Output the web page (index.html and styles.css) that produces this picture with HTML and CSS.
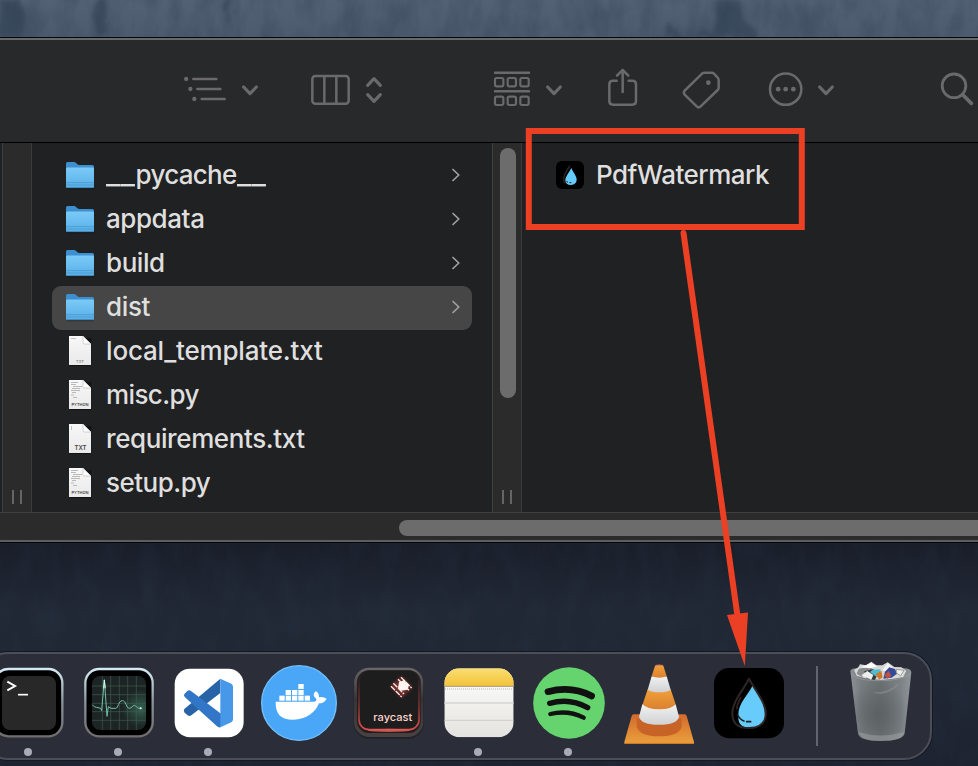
FILE: index.html
```html
<!DOCTYPE html>
<html lang="en">
<head>
<meta charset="utf-8">
<title>Finder</title>
<link rel="stylesheet" href="styles.css">
</head>
<body>
<svg class="defs" width="0" height="0" aria-hidden="true">
  <defs>
    <linearGradient id="folderFront" x1="0" y1="0" x2="0" y2="1"><stop offset="0" stop-color="#7bcbf8"/><stop offset="1" stop-color="#58aee6"/></linearGradient>
    <linearGradient id="paper" x1="0" y1="0" x2="0" y2="1"><stop offset="0" stop-color="#f8f8f8"/><stop offset="1" stop-color="#e9e9e9"/></linearGradient>
    <linearGradient id="bezel" x1="0" y1="0" x2="0" y2="1"><stop offset="0" stop-color="#d5e9f3"/><stop offset=".5" stop-color="#87939b"/><stop offset="1" stop-color="#716e6e"/></linearGradient>
    <symbol id="folder" viewBox="0 0 30 44">
      <rect x="1.5" y="31" width="27.500" height="4.500" rx="1" fill="#000" opacity=".22"/>
      <path d="M1 9.500Q1 8 2.500 8H9.300Q10.300 8 11 8.900L12.500 10.300Q13.200 11 14 11H27.500Q29 11 29 12.500V32Q29 33.500 27.500 33.500H2.500Q1 33.500 1 32Z" fill="#3e8fd0"/>
      <path d="M1 14.700Q1 13.500 2.500 13.500H27.500Q29 13.500 29 14.700V32.500Q29 34 27.500 34H2.500Q1 34 1 32.500Z" fill="url(#folderFront)"/>
      <path d="M1 28.600H29M1 31H29" stroke="#4594cb" stroke-width=".7"/>
      <path d="M2 33.600H28" stroke="#397fae" stroke-width=".8"/>
    </symbol>
    <symbol id="page" viewBox="0 0 30 44">
      <rect x="4.300" y="8" width="22" height="28" fill="#000" opacity=".4"/>
      <path d="M4 6H18L26 14V35H4Z" fill="url(#paper)"/>
      <path d="M18 6V12.500Q18 14 19.500 14H26Z" fill="#fff" stroke="#b5b5b5" stroke-width=".6"/>
    </symbol>
    <symbol id="code" viewBox="0 0 30 44">
      <path d="M6 8.500h7M6 10.500h5M8 12.500h9M7 14.500h8M6 16.500h9M7 18.500h4M6 21h3M8 23.500h4" stroke="#aaa" stroke-width=".8"/>
    </symbol>
    <symbol id="chev" viewBox="0 0 10 16"><path d="M2 2.500L7.800 8L2 13.500" fill="none" stroke="#a1a1a2" stroke-width="1.700" stroke-linecap="round" stroke-linejoin="round"/></symbol>
  </defs>
</svg>

<div class="desktop">
  <svg class="wall" width="978" height="766" aria-hidden="true">
    <defs>
      <filter id="grain" x="0" y="0" width="100%" height="100%" color-interpolation-filters="sRGB"><feTurbulence type="fractalNoise" baseFrequency=".05 .025" numOctaves="5" seed="8"/><feColorMatrix values="0 0 0 0 .16  0 0 0 0 .22  0 0 0 0 .29  1.6 0 0 0 -.55"/></filter>
      <filter id="smudge" x="-30%" y="-30%" width="160%" height="160%"><feTurbulence type="fractalNoise" baseFrequency=".12 .05" numOctaves="3" seed="3"/><feDisplacementMap in="SourceGraphic" scale="18"/><feGaussianBlur stdDeviation="2"/></filter>
    </defs>
    <rect width="978" height="38" filter="url(#grain)" opacity=".4"/>
    <rect y="543" width="978" height="223" filter="url(#grain)" opacity=".3"/>
    <g fill="#2c3a4e" filter="url(#smudge)" opacity=".5"><path d="M0 0H22L28 20L18 38H0Z"/><path d="M718 0H738L742 18L756 30V38H660L668 22L684 38L716 28Z"/><path d="M96 0H106L102 38H94Z"/><path d="M224 0H234L228 28Z"/></g>
  </svg>

  <main class="window">
    <header class="toolbar">
      <svg class="tool tool-list" width="85" height="50" viewBox="30 33 255 150"><g fill="#6a6a6c"><circle cx="48.500" cy="72" r="6.500"/><circle cx="61" cy="102" r="6.500"/><circle cx="73" cy="132" r="6.500"/></g><path class="ln w7" d="M70 72H139M82 102H151M95 132H164"/><path class="ln w9" d="M221 96L240 116L259 96"/></svg>
      <svg class="tool tool-columns" width="83" height="50" viewBox="405 33 249 150"><rect class="ln w7" x="427" y="63" width="109" height="83" rx="9"/><path class="ln w7 butt" d="M463 63V146M499 63V146"/><path class="ln w9" d="M593 91L612 71L631 91M593 119L612 139L631 119"/></svg>
      <svg class="tool tool-group" width="80" height="50" viewBox="24 33 240 150"><path class="ln w7" d="M45 53H147M45 109H147"/><g class="ln w6"><rect x="45" y="69" width="25" height="25" rx="5"/><rect x="83" y="69" width="25" height="25" rx="5"/><rect x="121" y="69" width="25" height="25" rx="5"/><rect x="45" y="125" width="25" height="25" rx="5"/><rect x="83" y="125" width="25" height="25" rx="5"/><rect x="121" y="125" width="25" height="25" rx="5"/></g><path class="ln w9" d="M203 96L222 116L241 96"/></svg>
      <svg class="tool tool-share" width="40" height="50" viewBox="369 33 120 150"><path class="ln w7" d="M410 77H399Q388 77 388 88V138Q388 149 399 149H457Q468 149 468 138V88Q468 77 457 77H446M428 111V47M411 62L428 45L445 62"/></svg>
      <svg class="tool tool-tag" width="48" height="50" viewBox="594 33 144 150"><path class="ln w7" d="M667 55Q670 53 674 53H695Q699 53 702 56L713 68Q716 71 716 75V98Q716 102 713 105L662 154Q656 160 650 154L614 119Q609 113 614 107Z"/><circle cx="685" cy="83" r="7" fill="#6a6a6c"/></svg>
      <svg class="tool tool-more" width="74" height="50" viewBox="72 33 222 150"><circle class="ln w7" cx="137" cy="102.500" r="47"/><g fill="#6a6a6c"><circle cx="114.500" cy="102.500" r="7"/><circle cx="137" cy="102.500" r="7"/><circle cx="160" cy="102.500" r="7"/></g><path class="ln w9" d="M239 96L258 116L277 96"/></svg>
      <svg class="tool tool-search" width="42" height="50" viewBox="588 33 126 150"><circle class="ln w8" cx="642" cy="92.500" r="35.500"/><path class="ln w10" d="M669 120L694 145"/></svg>
    </header>

    <section class="columns">
      <div class="edge"></div>
      <div class="gutter gutter-left"><i class="grip"></i></div>
      <ul class="files">
        <li class="row"><svg width="30" height="44"><use href="#folder"/></svg><span class="name n1"><span class="under">__</span>pycache<span class="under">__</span></span><svg class="more" width="10" height="16"><use href="#chev"/></svg></li>
        <li class="row"><svg width="30" height="44"><use href="#folder"/></svg><span class="name n2">appdata</span><svg class="more" width="10" height="16"><use href="#chev"/></svg></li>
        <li class="row"><svg width="30" height="44"><use href="#folder"/></svg><span class="name n3">build</span><svg class="more" width="10" height="16"><use href="#chev"/></svg></li>
        <li class="row selected"><svg width="30" height="44"><use href="#folder"/></svg><span class="name n4">dist</span><svg class="more" width="10" height="16"><use href="#chev"/></svg></li>
        <li class="row"><svg width="30" height="44"><use href="#page"/><path d="M6 8.500h5" stroke="#aaa" stroke-width=".7"/><text class="ext faint" x="15" y="32.500">TXT</text></svg><span class="name n5">local_template.txt</span></li>
        <li class="row"><svg width="30" height="44"><use href="#page"/><use href="#code"/><text class="ext py" x="15" y="32">PYTHON</text></svg><span class="name n6">misc.py</span></li>
        <li class="row"><svg width="30" height="44"><use href="#page"/><path d="M6.500 8v4" stroke="#aaa" stroke-width=".7"/><text class="ext txt" x="15.500" y="32">TXT</text></svg><span class="name n7">requirements.txt</span></li>
        <li class="row"><svg width="30" height="44"><use href="#page"/><use href="#code"/><text class="ext py" x="15" y="32">PYTHON</text></svg><span class="name n8">setup.py</span></li>
      </ul>
      <div class="gutter gutter-mid"><i class="thumb"></i><i class="grip"></i></div>
      <ul class="files apps">
        <li class="row"><svg class="app" width="28" height="28" viewBox="0 0 84 84"><rect width="84" height="84" rx="18" fill="#000"/><path d="M42 14C34 26 23 42 23 53Q23 62 28 67" fill="none" stroke="#302625" stroke-width="4"/><path d="M46 21C40 34 28 47 28 57Q28 72 45 72Q62 71 62 55C62 45 51 34 46 21Z" fill="#65cbfb"/><path d="M31 61L36 64M40 65H46" stroke="#211d1c" stroke-width="3"/></svg><span class="name n9">PdfWatermark</span></li>
      </ul>
    </section>
    <footer class="hscroll"><i class="hthumb"></i></footer>
  </main>

  <nav class="dock">
    <svg class="item" width="90" height="104" viewBox="-48 27 270 312">
      <rect x="-17" y="72" width="204" height="202" rx="42" fill="#000" stroke="url(#bezel)" stroke-width="7"/><rect x="6" y="93" width="162" height="162" rx="24" fill="#282828"/>
      <path d="M22 110L45 123L22 136" fill="none" stroke="#fff" stroke-width="6"/><path d="M54 149H84" stroke="#fff" stroke-width="5"/><circle class="dot" cx="84" cy="321" r="12"/></svg>
    <svg class="item" width="90" height="104" viewBox="222 27 270 312">
      <defs><radialGradient id="glow" cx=".9" cy=".6" r=".35"><stop offset="0" stop-color="#35604f"/><stop offset="1" stop-color="#1c2523"/></radialGradient></defs>
      <rect x="256" y="72" width="202" height="202" rx="42" fill="#000" stroke="url(#bezel)" stroke-width="7"/><rect x="276" y="93" width="162" height="162" rx="24" fill="url(#glow)"/>
      <path d="M307 93V255M332 93V255M358 93V255M383 93V255M409 93V255M276 123H438M276 149H438M276 175H438M276 200H438M276 226H438" stroke="#435b55" stroke-width="2"/>
      <path d="M277 179Q283 188 290 187L302 190L305 197L313 104L321 214L325 185L333 190H347C355 190 355 167 367 167C379 167 378 190 388 190C396 190 397 181 403 181C409 181 408 191 424 190" fill="none" stroke="#73bfa9" stroke-width="3" stroke-linejoin="round"/><path d="M311 130L313 105L316 130" fill="none" stroke="#d6fff3" stroke-width="3"/><circle cx="422" cy="190" r="3" fill="#d6fff3"/><circle class="dot" cx="354" cy="321" r="12"/></svg>
    <svg class="item" width="90" height="104" viewBox="492 27 270 312">
      <rect x="524" y="71" width="207" height="206" rx="46" fill="#fff"/>
      <path d="M661 101L553 192Q549 197 554 203L563 211Q568 215 574 211L661 144Z" fill="#2863a7"/>
      <path d="M572 137Q567 134 562 138L553 147Q550 152 555 157L651 244Q656 249 663 246V206Z" fill="#3277c7"/>
      <path d="M661 101L694 116Q699 119 699 125V222Q699 229 694 232L661 247Z" fill="#4798e9"/><circle class="dot" cx="624" cy="321" r="12"/></svg>
    <svg class="item" width="90" height="104" viewBox="12 27 270 312">
      <circle cx="147" cy="174" r="112" fill="#4aa7f8" stroke="#74c1fb" stroke-width="4"/>
      <path d="M77 170H193C199 169 201 164 197 159C188 153 191 144 197 139Q207 143 207 157Q218 154 230 161Q222 175 207 175C197 202 169 224 130 224C92 224 76 207 77 170Z" fill="#fff"/>
      <g fill="#fff"><rect x="88" y="152" width="16" height="15"/><rect x="107" y="152" width="16" height="15"/><rect x="126" y="152" width="16" height="15"/><rect x="145" y="152" width="16" height="15"/><rect x="164" y="152" width="16" height="15"/><rect x="107" y="135" width="16" height="15"/><rect x="126" y="135" width="16" height="15"/><rect x="145" y="135" width="16" height="15"/><rect x="145" y="117" width="16" height="15"/></g></svg>
    <svg class="item" width="90" height="104" viewBox="282 27 270 312">
      <defs><linearGradient id="rcOut" x1="0" y1="0" x2="0" y2="1"><stop offset="0" stop-color="#696869"/><stop offset=".45" stop-color="#373536"/><stop offset="1" stop-color="#484142"/></linearGradient><linearGradient id="rcRed" x1="0" y1="0" x2="0" y2="1"><stop offset=".1" stop-color="#262021"/><stop offset=".6" stop-color="#75302f"/><stop offset="1" stop-color="#d94f4b"/></linearGradient><filter id="soft" x="-30%" y="-30%" width="160%" height="160%"><feGaussianBlur stdDeviation="4"/></filter></defs>
      <rect x="311" y="72" width="211" height="210" rx="48" fill="#20232a"/><rect x="312" y="68" width="208" height="208" rx="46" fill="url(#rcOut)"/><rect x="321" y="76" width="191" height="188" rx="36" fill="#251b1d"/>
      <rect x="327" y="79" width="180" height="175" rx="30" fill="#201f20" stroke="url(#rcRed)" stroke-width="5"/><rect x="332" y="78" width="170" height="168" rx="25" fill="#1e1d1e"/><ellipse cx="417" cy="256" rx="64" ry="5" fill="#e0605c" opacity=".8"/>
      <path d="M454 94L487 127L455 159L421 125Z" fill="#b53b37" opacity=".55" filter="url(#soft)"/>
      <path d="M423 124L455 156M430 115L462 147M444 103L477 136M453 97L485 129" stroke="#ffeae4" stroke-width="4" stroke-dasharray="17 3"/><path d="M447 112L463 105L477 120L473 134L453 137L444 128Z" fill="#fff4ef"/>
      <text class="raycast" x="370" y="227" textLength="117" lengthAdjust="spacingAndGlyphs">raycast</text></svg>
    <svg class="item" width="90" height="104" viewBox="552 27 270 312">
      <defs><linearGradient id="yellow" x1="0" y1="0" x2="0" y2="1"><stop offset="0" stop-color="#fade71"/><stop offset="1" stop-color="#f3c33a"/></linearGradient><linearGradient id="note" x1="0" y1="0" x2="0" y2="1"><stop offset=".25" stop-color="#f8f8f6"/><stop offset="1" stop-color="#e4e3df"/></linearGradient><clipPath id="noteClip"><rect x="583" y="70" width="208" height="207" rx="46"/></clipPath></defs>
      <g clip-path="url(#noteClip)"><rect x="583" y="70" width="208" height="207" fill="url(#note)"/><rect x="583" y="70" width="208" height="54" fill="url(#yellow)"/><path d="M583 124H791" stroke="#a49a80" stroke-width="3"/><path d="M585 132H791" stroke="#b8b8b8" stroke-width="3" stroke-dasharray="3 3"/><path d="M583 174H791" stroke="#dcdcdc" stroke-width="6"/><path d="M583 226H791" stroke="#cecdca" stroke-width="3"/></g><circle class="dot" cx="684" cy="321" r="12"/></svg>
    <svg class="item" width="90" height="104" viewBox="12 162 270 312">
      <circle cx="147" cy="309" r="107.500" fill="#65d46e"/><g fill="none" stroke="#111" stroke-linecap="round"><path d="M84 275Q155 257 215 288" stroke-width="20"/><path d="M89 310Q150 293 203 323" stroke-width="16"/><path d="M91 342Q144 329 191 353" stroke-width="13"/></g><circle class="dot" cx="144" cy="456" r="12"/></svg>
    <svg class="item" width="90" height="104" viewBox="282 162 270 312">
      <defs><linearGradient id="base" x1="0" y1="0" x2="0" y2="1"><stop offset="0" stop-color="#d26a2c"/><stop offset="1" stop-color="#eba03b"/></linearGradient><linearGradient id="orange" x1="0" y1="0" x2="0" y2="1"><stop offset="0" stop-color="#f0a03a"/><stop offset="1" stop-color="#db812f"/></linearGradient><linearGradient id="white" x1="0" y1="0" x2="0" y2="1"><stop offset="0" stop-color="#f2f2f2"/><stop offset="1" stop-color="#cfd1d3"/></linearGradient></defs>
      <path d="M340 343H494Q498 343 500 348L522 426V431H313V426L335 348Q337 343 340 343Z" fill="url(#base)"/><path d="M315 430H520" stroke="#cf762c" stroke-width="3"/>
      <path d="M350 355V380Q360 409 417 409Q476 409 485 380V355Z" fill="#c86328"/>
      <path d="M367 313L357 350Q363 374 417 374Q471 374 477 350L467 313Z" fill="url(#white)"/><path d="M383 268L368 313Q380 328 418 328Q455 328 467 313L452 268Z" fill="url(#orange)"/><path d="M395 229L383 269Q395 277 418 277Q441 277 452 269L440 229Z" fill="url(#white)"/><path d="M405 197Q417 193 430 197L440 229Q418 237 395 229Z" fill="url(#orange)"/><path d="M407 197Q417 194 429 197" stroke="#d67a60" stroke-width="4" fill="none"/></svg>
    <svg class="item" width="90" height="104" viewBox="552 162 270 312">
      <rect x="582" y="204" width="210" height="211" rx="46" fill="#000"/>
      <path d="M698 256C686 284 655 309 655 343Q651 383 689 383C720 385 736 367 736 340C735 310 715 287 698 256Z" fill="#67ccfc"/>
      <path d="M687 236C674 265 637 304 637 341C637 372 657 384 687 384C718 384 737 369 737 341C737 304 700 265 687 236Z" fill="none" stroke="#302725" stroke-width="6" stroke-linejoin="round"/><path d="M663 292Q649 315 651 328" fill="none" stroke="#302725" stroke-width="5"/><path d="M653 345Q660 359 672 363M680 365H692" fill="none" stroke="#1f1c1c" stroke-width="5" stroke-linecap="round"/></svg>
    <i class="separator"></i>
    <svg class="trash" width="70" height="104" viewBox="201 42 210 312">
      <defs><linearGradient id="can"><stop offset="0" stop-color="#8a9093"/><stop offset=".18" stop-color="#777d80"/><stop offset=".5" stop-color="#6b7073"/><stop offset=".82" stop-color="#7b8184"/><stop offset="1" stop-color="#8f9598"/></linearGradient><radialGradient id="shade" cx=".45" cy=".62" r=".5"><stop offset="0" stop-color="#5c6164"/><stop offset="1" stop-color="#5c6164" stop-opacity="0"/></radialGradient></defs>
      <path d="M211 93Q214 84 230 85H377Q393 87 394 97L374 280Q370 303 302 303Q237 303 234 280Z" fill="url(#can)"/><path d="M211 93L234 280Q237 303 302 303Q370 303 374 280L394 97Z" fill="url(#shade)"/>
      <path d="M222 90L235 82L240 73L258 76L274 65L289 76L307 76L323 67L343 81L364 82L379 92L370 111L335 117L302 120L253 114L230 107Z" fill="#d8d8d6"/>
      <path d="M236 86L267 80L283 91L260 99L246 111L230 101Z" fill="#8b8c8d"/><path d="M243 82L273 69L292 79L269 85Z" fill="#fff"/><path d="M253 94L278 88L298 96L284 120L260 115Z" fill="#343638"/><path d="M270 96L278 89L302 88L300 98L290 111Z" fill="#4bbfd6"/><path d="M286 103L304 92L308 112L298 119Z" fill="#cb7a2d"/><path d="M307 91L324 69L342 88L325 96Z" fill="#f5f5f5"/><path d="M315 95L328 82L345 87L351 101L335 113L310 116Z" fill="#344a96"/><path d="M313 106L326 92L334 108L322 116Z" fill="#be5144"/><path d="M349 88L372 91L362 107L349 99Z" fill="#eee" stroke="#777" stroke-width="2"/><path d="M244 106L262 93L280 105L274 119Z" fill="#eee"/>
      <path d="M214 101Q227 116 260 120L302 122Q358 123 391 102" fill="none" stroke="#a0a4a5" stroke-width="3" opacity=".6"/><path d="M276 157Q330 158 358 127Q343 158 299 163Z" fill="#a9adaf" opacity=".3"/><path d="M237 277Q302 296 372 276Q370 303 302 303Q239 303 237 277Z" fill="#a7abac" opacity=".45"/></svg>
  </nav>

  <svg class="annotation" width="978" height="766" aria-hidden="true"><rect x="528.800" y="131" width="273" height="96" fill="none" stroke="#ec4025" stroke-width="6"/><path d="M683.500 233L737.500 616" stroke="#ec4025" stroke-width="6" stroke-linecap="round"/><path d="M727 615L748 612.500L744.800 666Z" fill="#ec4025"/></svg>
</div>
</body>
</html>
```
FILE: styles.css
```css
* { box-sizing: border-box; }
body { margin: 0; overflow: hidden; font-family: Inter, "Liberation Sans", sans-serif; }
.defs { position: absolute; }
.desktop {
  position: relative;
  display: flow-root;
  width: 978px;
  height: 766px;
  overflow: hidden;
  background: linear-gradient(#536175 0, #4d5b6f 37px, #191d28 540px, #212835 610px, #202735 680px, #1d2330 766px);
}
.wall, .annotation { position: absolute; top: 0; left: 0; pointer-events: none; }
.window {
  position: relative;
  margin-top: 37px;
  height: 506px;
  display: flex;
  flex-direction: column;
  border-top: 1px solid #05070b;
  border-bottom: 1px solid #05070b;
  background: #202122;
}
.toolbar {
  display: flex;
  align-items: center;
  height: 105px;
  flex: none;
  padding-bottom: 1px;
  border-top: 2px solid #68696b;
  border-bottom: 1px solid #000;
  background: #28292b;
}
.tool { flex: none; }
.tool-list { margin-left: 180px; }
.tool-columns { margin-left: 40px; }
.tool-group { margin-left: 100px; }
.tool-share, .tool-tag { margin-left: 35px; }
.tool-more { margin-left: 38px; }
.tool-search { margin-left: 98px; }
.ln { fill: none; stroke: #6a6a6c; stroke-linecap: round; stroke-linejoin: round; }
.butt { stroke-linecap: butt; }
.w6 { stroke-width: 6.5; }
.w7 { stroke-width: 7.5; }
.w8 { stroke-width: 8.5; }
.w9 { stroke-width: 9.5; }
.w10 { stroke-width: 11; }

.columns { display: flex; height: 369px; flex: none; }
.edge { width: 2px; }
.gutter {
  display: flex;
  flex-direction: column;
  align-items: center;
  width: 30px;
  padding: 5px 0 8px;
  background: #2b2b2b;
  border-left: 1px solid #3e3f40;
  border-right: 1px solid #3a3b3c;
}
.thumb { width: 16px; height: 250px; margin-left: 1px; border-radius: 8px; background: #6c6c6c; }
.grip { width: 10px; height: 14px; margin-top: auto; border: solid #656565; border-width: 0 2px; }
.files { width: 460px; margin: 0; padding: 11px 20px 0; list-style: none; }
.row { display: flex; align-items: center; height: 44px; padding: 0 11px 0 13px; border-radius: 9px; }
.selected { background: #464646; }
.name { margin: -2px 0 0 11px; font-size: 26px; line-height: 44px; font-weight: 450; color: #dfdfdf; white-space: pre; }
.under { display: inline-block; width: 29.5px; letter-spacing: 0; transform: scaleX(1.2); transform-origin: left; }
.n1 { letter-spacing: -.7px; }
.n2, .n3 { letter-spacing: -.43px; }
.n4 { letter-spacing: -.35px; }
.n5 { letter-spacing: -.17px; }
.n6 { letter-spacing: -.6px; }
.n7 { letter-spacing: -.4px; }
.n8, .n9 { letter-spacing: -.5px; }
.more { margin: -2px 0 0 auto; }
.apps { flex: 1; padding-left: 21px; }
.apps .name { margin-left: 12px; }
.app { margin-top: -2px; }
.ext { font: 600 4px Inter, sans-serif; text-anchor: middle; fill: #444; }
.faint { fill: #888; font-weight: 500; }
.txt { font-size: 6px; }

.hscroll {
  height: 30px;
  padding: 7px 0 0 399px;
  background: #2b2b2b;
  border-top: 1px solid #3e3f40;
  border-bottom: 2px solid #5d5e5f;
}
.hthumb { display: block; height: 16px; border-radius: 8px 0 0 8px; background: #6c6c6c; }

.dock {
  position: relative;
  display: flex;
  width: 952px;
  height: 108px;
  margin: 109px 0 0 -20px;
  padding-left: 2px;
  border: 2px solid #4b4e58;
  border-radius: 28px;
  background: #2b2e39;
  box-shadow: 0 0 0 1px #141821;
}
.item, .trash { flex: none; }
.separator { flex: none; width: 2px; height: 80px; margin: 12px 0 0 22px; background: #62656f; }
.trash { margin-left: 29px; }
.dot { fill: #a9abb5; }
.raycast { font: 500 31px Inter, sans-serif; fill: #ffd4cf; }
```
